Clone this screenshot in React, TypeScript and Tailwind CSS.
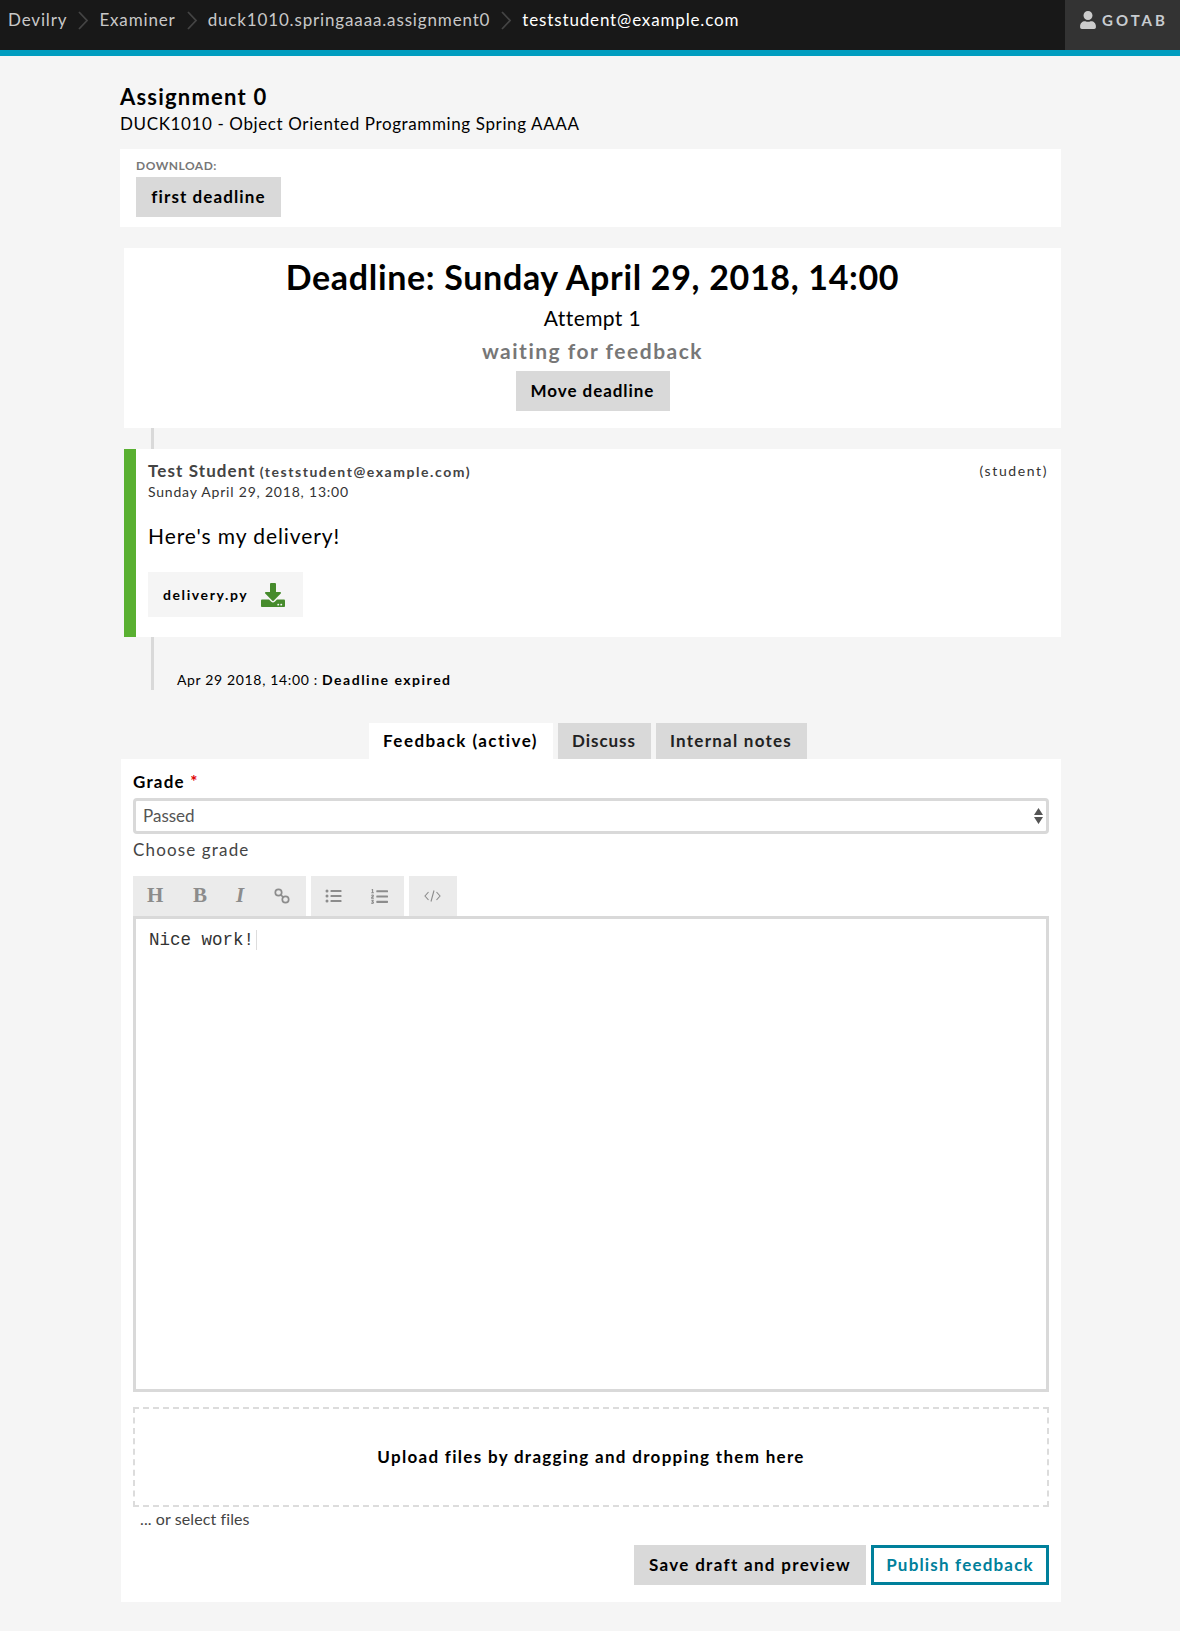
import { FaDownload, FaListOl, FaListUl, FaUser } from 'react-icons/fa'

const crumbs = ['Devilry', 'Examiner', 'duck1010.springaaaa.assignment0']

const Chevron = () => (
  <svg className="mx-[10px] h-[19px] w-[12px] text-[#444]" fill="none" stroke="currentColor" strokeWidth="1.8" viewBox="0 0 12 19">
    <path d="M2 1l8 8.500-8 8.500" />
  </svg>
)

const Header = () => (
  <header className="flex h-[56px] border-b-[6px] border-[#009dbf] bg-[#181818]">
    <nav className="flex flex-1 items-center pb-[10px] pl-[8px] text-[17px] tracking-[0.85px] text-[#c8c8c8]">
      {crumbs.map((crumb) => (
        <span className="flex items-center" key={crumb}>
          {crumb}
          <Chevron />
        </span>
      ))}
      <span className="text-white">teststudent@example.com</span>
    </nav>
    <div className="flex w-[115px] items-center gap-[6px] bg-[#333] pb-[10px] pl-[15px] text-[#ccc]">
      <FaUser className="h-[18px] w-[16px]" />
      <span className="text-[15px] font-bold tracking-[3px] text-[#c8ccd0]">GOTAB</span>
    </div>
  </header>
)

const Toolbar = () => (
  <div className="flex h-[40px] gap-[5px] text-[#8c8c8c]">
    <div className="flex w-[173px] items-center bg-[#ebebeb] pl-[14px] font-['Liberation_Serif',serif] text-[21px] font-bold">
      <span className="w-[46px]">H</span>
      <span className="w-[43px]">B</span>
      <span className="w-[38px] italic">I</span>
      <svg className="h-[16px] w-[16px]" fill="none" stroke="currentColor" strokeWidth="1.700" viewBox="0 0 16 16">
        <circle cx="4.500" cy="4.500" r="3.200" />
        <circle cx="11.500" cy="11.500" r="3.200" />
        <path d="M6.500 6.500l3 3" />
      </svg>
    </div>
    <div className="flex w-[93px] items-center gap-[29px] bg-[#ebebeb] pl-[14px]">
      <FaListUl className="h-[16px] w-[17px]" />
      <FaListOl className="h-[17px] w-[17px]" />
    </div>
    <div className="flex w-[48px] items-center justify-center bg-[#ebebeb] pr-[2px]">
      <svg className="h-[12px] w-[17px]" fill="none" stroke="currentColor" strokeWidth="1.100" viewBox="0 0 17 12">
        <path d="M4.500 2L1 6l3.500 4M12.500 2L16 6l-3.500 4M10 0.500L7 11.500" />
      </svg>
    </div>
  </div>
)

export default function App() {
  return (
    <div className="min-h-[1631px] bg-[#f5f5f5] font-['Lato',sans-serif] text-black">
      <Header />
      <main className="ml-[120px] w-[941px]">
        <h1 className="mt-[27px] text-[22px] leading-[28px] font-bold tracking-[1.2px]">Assignment 0</h1>
        <p className="mt-[1px] text-[17px] leading-[24px] tracking-[0.62px]">
          DUCK1010 - Object Oriented Programming Spring AAAA
        </p>

        <section className="mt-[13px] h-[78px] bg-white pt-[9px] pl-[16px]">
          <p className="text-[12px] leading-[16px] font-bold tracking-[0.5px] text-[#777]">DOWNLOAD:</p>
          <button className="mt-[3px] h-[40px] w-[145px] bg-[#d9d9d9] text-[17px] font-bold tracking-[1.1px]">
            first deadline
          </button>
        </section>

        <section className="mt-[21px] ml-[4px] flex h-[180px] flex-col items-center bg-white pt-[7px]">
          <h2 className="text-[34px] leading-[44px] font-bold tracking-[0.67px]">
            Deadline: Sunday April 29, 2018, 14:00
          </h2>
          <p className="mt-[5px] text-[21px] leading-[28px] tracking-[0.4px]">Attempt 1</p>
          <p className="mt-[5px] text-[21px] leading-[28px] font-bold tracking-[1.5px] text-[#777]">waiting for feedback</p>
          <button className="mt-[6px] h-[40px] w-[154px] bg-[#d9d9d9] text-[17px] font-bold tracking-[0.95px]">
            Move deadline
          </button>
        </section>

        <div className="ml-[31px] h-[21px] w-[3px] bg-[#d9d9d9]" />

        <article className="ml-[4px] flex h-[188px] border-l-[12px] border-[#59b031] bg-white pt-[12px] pr-[13px] pl-[12px]">
          <div className="flex-1">
            <p className="leading-[20px] font-bold text-[#444]">
              <span className="text-[17px] tracking-[1.1px]">Test Student</span>{' '}
              <span className="text-[14px] tracking-[1.55px]">(teststudent@example.com)</span>
            </p>
            <p className="text-[14px] leading-[20px] tracking-[0.8px] text-[#333]">Sunday April 29, 2018, 13:00</p>
            <p className="mt-[18px] text-[21px] leading-[32px] tracking-[0.92px]">Here's my delivery!</p>
            <div className="mt-[20px] flex h-[45px] w-[155px] items-center bg-[#f5f5f5] pl-[15px]">
              <span className="text-[14px] font-bold tracking-[1.6px]">delivery.py</span>
              <FaDownload className="ml-[12px] h-[24px] w-[26px] text-[#468b2c]" />
            </div>
          </div>
          <span className="text-[14px] leading-[20px] tracking-[1.6px] text-[#333]">(student)</span>
        </article>

        <div className="ml-[31px] flex h-[53px] w-fit border-l-[3px] border-[#d9d9d9] pt-[33px] pl-[23px] text-[14px] leading-[20px] tracking-[0.65px]">
          <span>Apr 29 2018, 14:00 :&nbsp;</span>
          <strong className="tracking-[1.5px]">Deadline expired</strong>
        </div>

        <div className="mt-[33px] flex h-[36px] justify-center gap-[5px] pr-[6px] text-[17px] font-bold">
          <span className="flex w-[184px] items-center justify-center bg-white tracking-[1.45px]">Feedback (active)</span>
          <span className="flex w-[93px] items-center justify-center bg-[#d9d9d9] tracking-[0.95px] text-[#222]">Discuss</span>
          <span className="flex w-[151px] items-center justify-center bg-[#d9d9d9] tracking-[1.25px] text-[#222]">Internal notes</span>
        </div>

        <section className="ml-[1px] h-[843px] bg-white pt-[11px] pr-[12px] pl-[12px]">
          <label className="block text-[17px] leading-[24px] font-bold tracking-[1.2px]">
            Grade <span className="text-[#e00000]">*</span>
          </label>
          <div className="mt-[4px] flex h-[36px] items-center justify-between rounded-[4px] border-[3px] border-[#d9d9d9] pr-[3px] pl-[7px] text-[17px] text-[#555]">
            <span>Passed</span>
            <svg className="h-[16px] w-[9px] text-[#555]" fill="currentColor" viewBox="0 0 9 16">
              <path d="M4.500 0L9 7H0zM0 9h9l-4.500 7z" />
            </svg>
          </div>
          <p className="mt-[4px] text-[17px] leading-[24px] tracking-[1.15px] text-[#444]">Choose grade</p>
          <div className="mt-[14px]">
            <Toolbar />
          </div>
          <div className="h-[476px] border-[3px] border-[#d9d9d9] px-[13px] pt-[9px] font-['Liberation_Mono',monospace] text-[17.500px] leading-[24px] text-[#333]">
            Nice work!<span className="ml-[2px] inline-block h-[20px] w-px bg-[#ddd] align-middle" />
          </div>
          <div className="mt-[15px] flex h-[100px] items-center justify-center border-2 border-dashed border-[#dcdcdc] text-[17px] font-bold tracking-[1.3px]">
            Upload files by dragging and dropping them here
          </div>
          <p className="mt-[1px] pl-[7px] text-[16px] leading-[22px] tracking-[0.1px] text-[#444]">... or select files</p>
          <div className="mt-[15px] flex justify-end gap-[5px] text-[17px] font-bold">
            <button className="h-[40px] w-[232px] bg-[#d9d9d9] tracking-[1.32px]">Save draft and preview</button>
            <button className="h-[40px] w-[178px] border-[3px] border-[#00809b] tracking-[1.18px] text-[#00809b]">Publish feedback</button>
          </div>
        </section>
      </main>
    </div>
  )
}
